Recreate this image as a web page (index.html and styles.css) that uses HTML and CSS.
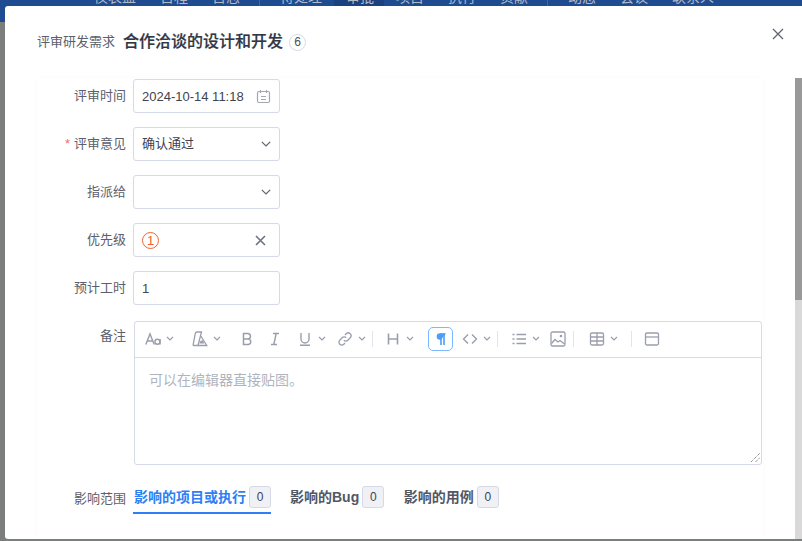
FILE: index.html
```html
<!DOCTYPE html>
<html lang="zh-CN">
<head>
<meta charset="utf-8">
<title>评审研发需求</title>
<link rel="stylesheet" href="styles.css">
</head>
<body>
<nav class="nav">
  <span class="nav-item">仪表盘</span><span class="nav-item">日程</span><span class="nav-item">日志</span>
  <i class="nav-sep"></i>
  <span class="nav-item">待处理</span><span class="nav-item nav-active">审批</span><span class="nav-item">项目</span><span class="nav-item">执行</span><span class="nav-item">贡献</span>
  <i class="nav-sep"></i>
  <span class="nav-item">动态</span><span class="nav-item">会议</span><span class="nav-item">联系人</span>
</nav>
<section class="modal">
  <header class="modal-head">
    <span class="crumb">评审研发需求</span>
    <strong class="title">合作洽谈的设计和开发</strong>
    <span class="id-badge">6</span>
    <svg class="close" width="12" height="12" viewBox="0 0 12 12"><path d="M1 1l10 10M11 1L1 11" stroke="#5f6472" stroke-width="1.3" fill="none"/></svg>
  </header>
  <div class="scroll-track"><div class="scroll-thumb"></div></div>
  <form class="panel">
    <div class="row">
      <label class="label">评审时间</label>
      <div class="field">
        <span class="value">2024-10-14 11:18</span>
        <svg class="cal" width="15" height="15" viewBox="0 0 15 15" fill="none" stroke="#a3a7b2" stroke-width="1.2"><rect x="1.5" y="2.5" width="12" height="11" rx="1.5"/><path d="M4.5 1v3M10.5 1v3M5 7.5h5M5 10.5h5"/></svg>
      </div>
    </div>
    <div class="row">
      <label class="label"><em class="req">*</em>评审意见</label>
      <div class="field">
        <span class="value value-cjk">确认通过</span>
        <svg class="chev-lg" width="10" height="6" viewBox="0 0 10 6"><path d="M.8.8L5 5l4.2-4.2" fill="none" stroke="#5f6472" stroke-width="1.2"/></svg>
      </div>
    </div>
    <div class="row">
      <label class="label">指派给</label>
      <div class="field">
        <span class="value"></span>
        <svg class="chev-lg" width="10" height="6" viewBox="0 0 10 6"><path d="M.8.8L5 5l4.2-4.2" fill="none" stroke="#5f6472" stroke-width="1.2"/></svg>
      </div>
    </div>
    <div class="row">
      <label class="label">优先级</label>
      <div class="field">
        <span class="pri">1</span>
        <svg class="clear" width="11" height="11" viewBox="0 0 11 11"><path d="M1 1l9 9M10 1l-9 9" stroke="#6d7280" stroke-width="1.6" fill="none"/></svg>
      </div>
    </div>
    <div class="row">
      <label class="label">预计工时</label>
      <div class="field"><span class="value">1</span></div>
    </div>
    <div class="row row-editor">
      <label class="label label-editor">备注</label>
      <div class="editor">
        <div class="toolbar">
          <svg class="ic" viewBox="0 0 16 16" fill="none" stroke="#9a9eac" stroke-width="1.4"><path d="M.8 13.500L5 3l4.200 10.500M2.200 10h5.600"/><circle cx="12.400" cy="10.800" r="2.500"/><path d="M15.100 8v5.500"/></svg>
          <svg class="chev" viewBox="0 0 8 5"><path d="M1 1l3 3 3-3"/></svg>
          <svg class="ic m18" viewBox="0 0 16 16" fill="none" stroke="#9a9eac" stroke-width="1.3"><path d="M1 14.500L3.300 2.300Q3.600 1 5 1H9.500L6 14.500M8.500 4.500L14.800 14.500H1"/><path d="M8 10.500l2.500-1.500 2 3.500H7.500z" fill="#9a9eac" stroke="none"/></svg>
          <svg class="chev" viewBox="0 0 8 5"><path d="M1 1l3 3 3-3"/></svg>
          <svg class="ic m18" viewBox="0 0 16 16" fill="none" stroke="#9a9eac" stroke-width="1.5"><path d="M4.500 2.500h4.200a2.700 2.700 0 010 5.500H4.500zM4.500 8h5a2.800 2.800 0 010 5.500h-5z"/></svg>
          <svg class="ic m12" viewBox="0 0 16 16" fill="none" stroke="#9a9eac" stroke-width="1.4"><path d="M6 2.500h6M4 13.500h6M9.200 2.500L6.800 13.500"/></svg>
          <svg class="ic m14" viewBox="0 0 16 16" fill="none" stroke="#9a9eac" stroke-width="1.4"><path d="M4 2v6a4 4 0 008 0V2M3 14.300h10"/></svg>
          <svg class="chev" viewBox="0 0 8 5"><path d="M1 1l3 3 3-3"/></svg>
          <svg class="ic m11" viewBox="0 0 16 16" fill="none" stroke="#9a9eac" stroke-width="1.3"><path d="M6.800 9.200a2.700 2.700 0 004 0l2.400-2.400a2.800 2.800 0 00-4-4L8 4"/><path d="M9.200 6.800a2.700 2.700 0 00-4 0L2.800 9.200a2.800 2.800 0 004 4L8 12"/></svg>
          <svg class="chev" viewBox="0 0 8 5"><path d="M1 1l3 3 3-3"/></svg>
          <i class="tb-sep"></i>
          <svg class="ic m12" viewBox="0 0 16 16" fill="none" stroke="#9a9eac" stroke-width="1.600"><path d="M3.500 2.500v11M12.500 2.500v11M3.500 8h9"/></svg>
          <svg class="chev" viewBox="0 0 8 5"><path d="M1 1l3 3 3-3"/></svg>
          <span class="tb-active">
            <svg width="12" height="14" viewBox="0 0 12 14" fill="none" stroke="#4b9dfa"><path d="M6 13V1.200M9 13V1.200" stroke-width="1.600"/><path d="M11 1.200H5a3.200 3.200 0 000 6.600h1z" fill="#4b9dfa" stroke="none"/></svg>
          </span>
          <svg class="ic m9" viewBox="0 0 16 16" fill="none" stroke="#9a9eac" stroke-width="1.400"><path d="M6 3.500L1.500 8 6 12.500M10 3.500L14.500 8 10 12.500"/></svg>
          <svg class="chev" viewBox="0 0 8 5"><path d="M1 1l3 3 3-3"/></svg>
          <i class="tb-sep"></i>
          <svg class="ic m13" viewBox="0 0 16 16" fill="none" stroke="#9a9eac" stroke-width="1.300"><path d="M5.500 3.500H15M5.500 8H15M5.500 12.500H15M1.500 3.500h2M1.500 8h2M1.500 12.500h2"/></svg>
          <svg class="chev" viewBox="0 0 8 5"><path d="M1 1l3 3 3-3"/></svg>
          <svg class="ic m10" viewBox="0 0 16 16" fill="none" stroke="#9a9eac" stroke-width="1.300"><rect x="1" y="1" width="14" height="14" rx="1.500"/><path d="M1.500 12.500l3.500-4 3 2.500 2-1.500 4.500 3.500"/><circle cx="11" cy="5" r="1.300" fill="#9a9eac" stroke="none"/></svg>
          <i class="tb-sep tb-sep-10"></i>
          <svg class="ic m15" viewBox="0 0 16 16" fill="none" stroke="#9a9eac" stroke-width="1.300"><rect x="1.500" y="2" width="13" height="12" rx="1.500"/><path d="M1.500 6h13M1.500 10h13M8 2v12"/></svg>
          <svg class="chev" viewBox="0 0 8 5"><path d="M1 1l3 3 3-3"/></svg>
          <i class="tb-sep tb-sep-14"></i>
          <svg class="ic m12" viewBox="0 0 16 16" fill="none" stroke="#9a9eac" stroke-width="1.300"><rect x="1.500" y="2" width="13" height="12" rx="1.500"/><path d="M1.500 6h13"/></svg>
        </div>
        <div class="editor-body">
          <span class="placeholder">可以在编辑器直接贴图。</span>
          <svg class="grip" width="9" height="9" viewBox="0 0 9 9"><path d="M0 9l9-9M4.500 9L9 4.500" stroke="#666" stroke-width="1" stroke-dasharray="1 1" fill="none"/></svg>
        </div>
      </div>
    </div>
    <div class="row row-tabs">
      <label class="label">影响范围</label>
      <div class="tabs">
        <div class="tab tab-active">影响的项目或执行<span class="count">0</span></div>
        <div class="tab">影响的Bug<span class="count">0</span></div>
        <div class="tab">影响的用例<span class="count">0</span></div>
      </div>
    </div>
  </form>
</section>
</body>
</html>
```

FILE: styles.css
```css
* { box-sizing: border-box; }
html, body {
  margin: 0;
  height: 541px;
  overflow: hidden;
}
body {
  position: relative;
  background: #7c7d7d;
  font-family: "Liberation Sans", "Noto Sans CJK SC", sans-serif;
  font-size: 13px;
  color: #3e4350;
}

/* background nav, mostly hidden behind the modal */
.nav {
  display: flex;
  align-items: flex-start;
  height: 22px;
  padding-left: 82px;
  background: #1f4b91;
  overflow: hidden;
}
.nav-item {
  padding: 0 12px;
  height: 22px;
  margin-top: -14px;
  font-size: 14px;
  line-height: 22px;
  color: #b4bac4;
}
.nav-active {
  padding-right: 10px;
  height: 36px;
  background: #1b427f;
}
.nav-sep {
  width: 1px;
  height: 22px;
  margin: 0 8px 0 7px;
  background: #4066a3;
}

/* modal */
.modal {
  position: absolute;
  left: 5px;
  top: 6px;
  width: 810px;
  height: 533px;
  background: #fff;
  border-radius: 3px;
  overflow: hidden;
}
.modal-head {
  display: flex;
  align-items: center;
  height: 72px;
  padding-left: 33px;
}
.crumb {
  margin-left: -1px;
  padding-bottom: 4px;
  color: #5c606c;
  font-size: 13px;
}
.title {
  margin-left: 8px;
  padding-bottom: 4px;
  font-size: 16px;
  font-weight: 500;
  color: #313644;
  -webkit-text-stroke: 0.2px #313644;
}
.id-badge {
  display: flex;
  align-items: center;
  justify-content: center;
  width: 17px;
  height: 17px;
  margin-left: 6px;
  border: 1px solid #d6d9e6;
  border-radius: 50%;
  font-size: 12px;
  color: #4a4f5c;
}
.close {
  position: absolute;
  left: 767px;
  top: 22px;
}
.scroll-track {
  position: absolute;
  left: 790px;
  top: 72px;
  width: 7px;
  bottom: 0;
  background: #d9d9d9;
}
.scroll-thumb { height: 222px; background: #999; }

/* form */
.panel {
  display: flex;
  flex-direction: column;
  gap: 14px;
  width: 726px;
  height: 461px;
  margin-left: 32px;
  padding-top: 1px;
  box-shadow: 0 0 6px rgba(0, 0, 0, .025);
}
.row { display: flex; align-items: center; gap: 7px; }
.label {
  width: 89px;
  flex: none;
  padding-bottom: 4px;
  text-align: right;
  font-size: 13px;
  color: #5c606c;
}
.req {
  margin-right: 4px;
  font-style: normal;
  color: #f56c6c;
}
.field {
  display: flex;
  align-items: center;
  justify-content: space-between;
  width: 147px;
  height: 34px;
  padding: 0 8px;
  border: 1px solid #d6d9e6;
  border-radius: 3px;
  background: #fff;
}
.value { font-size: 13px; color: #3e4350; }
.value-cjk { padding-bottom: 4px; }
.clear { margin-right: 5px; }
.pri {
  display: flex;
  align-items: center;
  justify-content: center;
  width: 17px;
  height: 17px;
  border: 1.5px solid #f4602c;
  border-radius: 50%;
  font-size: 13px;
  color: #f4602c;
}

/* editor */
.row-editor { align-items: flex-start; margin-top: 2px; gap: 8px; }
.label-editor { margin-top: 4px; margin-right: -1px; }
.editor {
  display: flex;
  flex-direction: column;
  width: 628px;
  height: 144px;
  margin-left: 1px;
  border: 1px solid #d6d9e6;
  border-radius: 3px;
}
.toolbar {
  display: flex;
  flex: none;
  align-items: center;
  height: 36px;
  padding: 0 0 2px 10px;
  border-bottom: 1px solid #d6d9e6;
}
.ic { width: 16px; height: 16px; flex: none; }
.chev {
  width: 8px;
  height: 5px;
  margin-left: 5px;
  flex: none;
  fill: none;
  stroke: #9a9eac;
  stroke-width: 1.2;
}
.m9 { margin-left: 9px; }
.m10 { margin-left: 10px; }
.m11 { margin-left: 11px; }
.m12 { margin-left: 12px; }
.m13 { margin-left: 13px; }
.m14 { margin-left: 14px; }
.m15 { margin-left: 15px; }
.m18 { margin-left: 18px; }
.tb-sep {
  flex: none;
  width: 1px;
  height: 16px;
  margin-left: 6px;
  background: #e2e4ec;
}
.tb-sep-10 { margin-left: 7px; }
.tb-sep-14 { margin-left: 13px; }
.tb-active {
  display: flex;
  flex: none;
  align-items: center;
  justify-content: center;
  width: 25px;
  height: 24px;
  margin-left: 14px;
  border: 1px solid #7ab8ff;
  border-radius: 5px;
}
.editor-body {
  position: relative;
  flex: 1;
  padding: 12px 14px;
}
.placeholder { font-size: 14px; line-height: 20px; color: #b0b4be; }
.grip { position: absolute; right: 1px; bottom: 2px; }

/* tabs */
.row-tabs { align-items: flex-start; margin-top: 1px; }
.row-tabs .label { margin-top: 8px; }
.tabs { display: flex; gap: 18.5px; }
.tab {
  display: flex;
  align-items: center;
  height: 34px;
  padding: 2px 0 2px 1px;
  font-size: 14px;
  font-weight: 700;
  color: #525766;
  line-height: 22px;
}
.tab-active {
  margin-right: -.5px;
  padding-bottom: 0;
  color: #2e7ff6;
  border-bottom: 2px solid #2e7ff6;
}
.count {
  display: flex;
  align-items: center;
  justify-content: center;
  width: 22px;
  height: 22px;
  margin-left: 3px;
  background: #f0f1f5;
  border: 1px solid #d6d9e6;
  border-radius: 3px;
  font-size: 12px;
  font-weight: 400;
  color: #3e4350;
}
```
